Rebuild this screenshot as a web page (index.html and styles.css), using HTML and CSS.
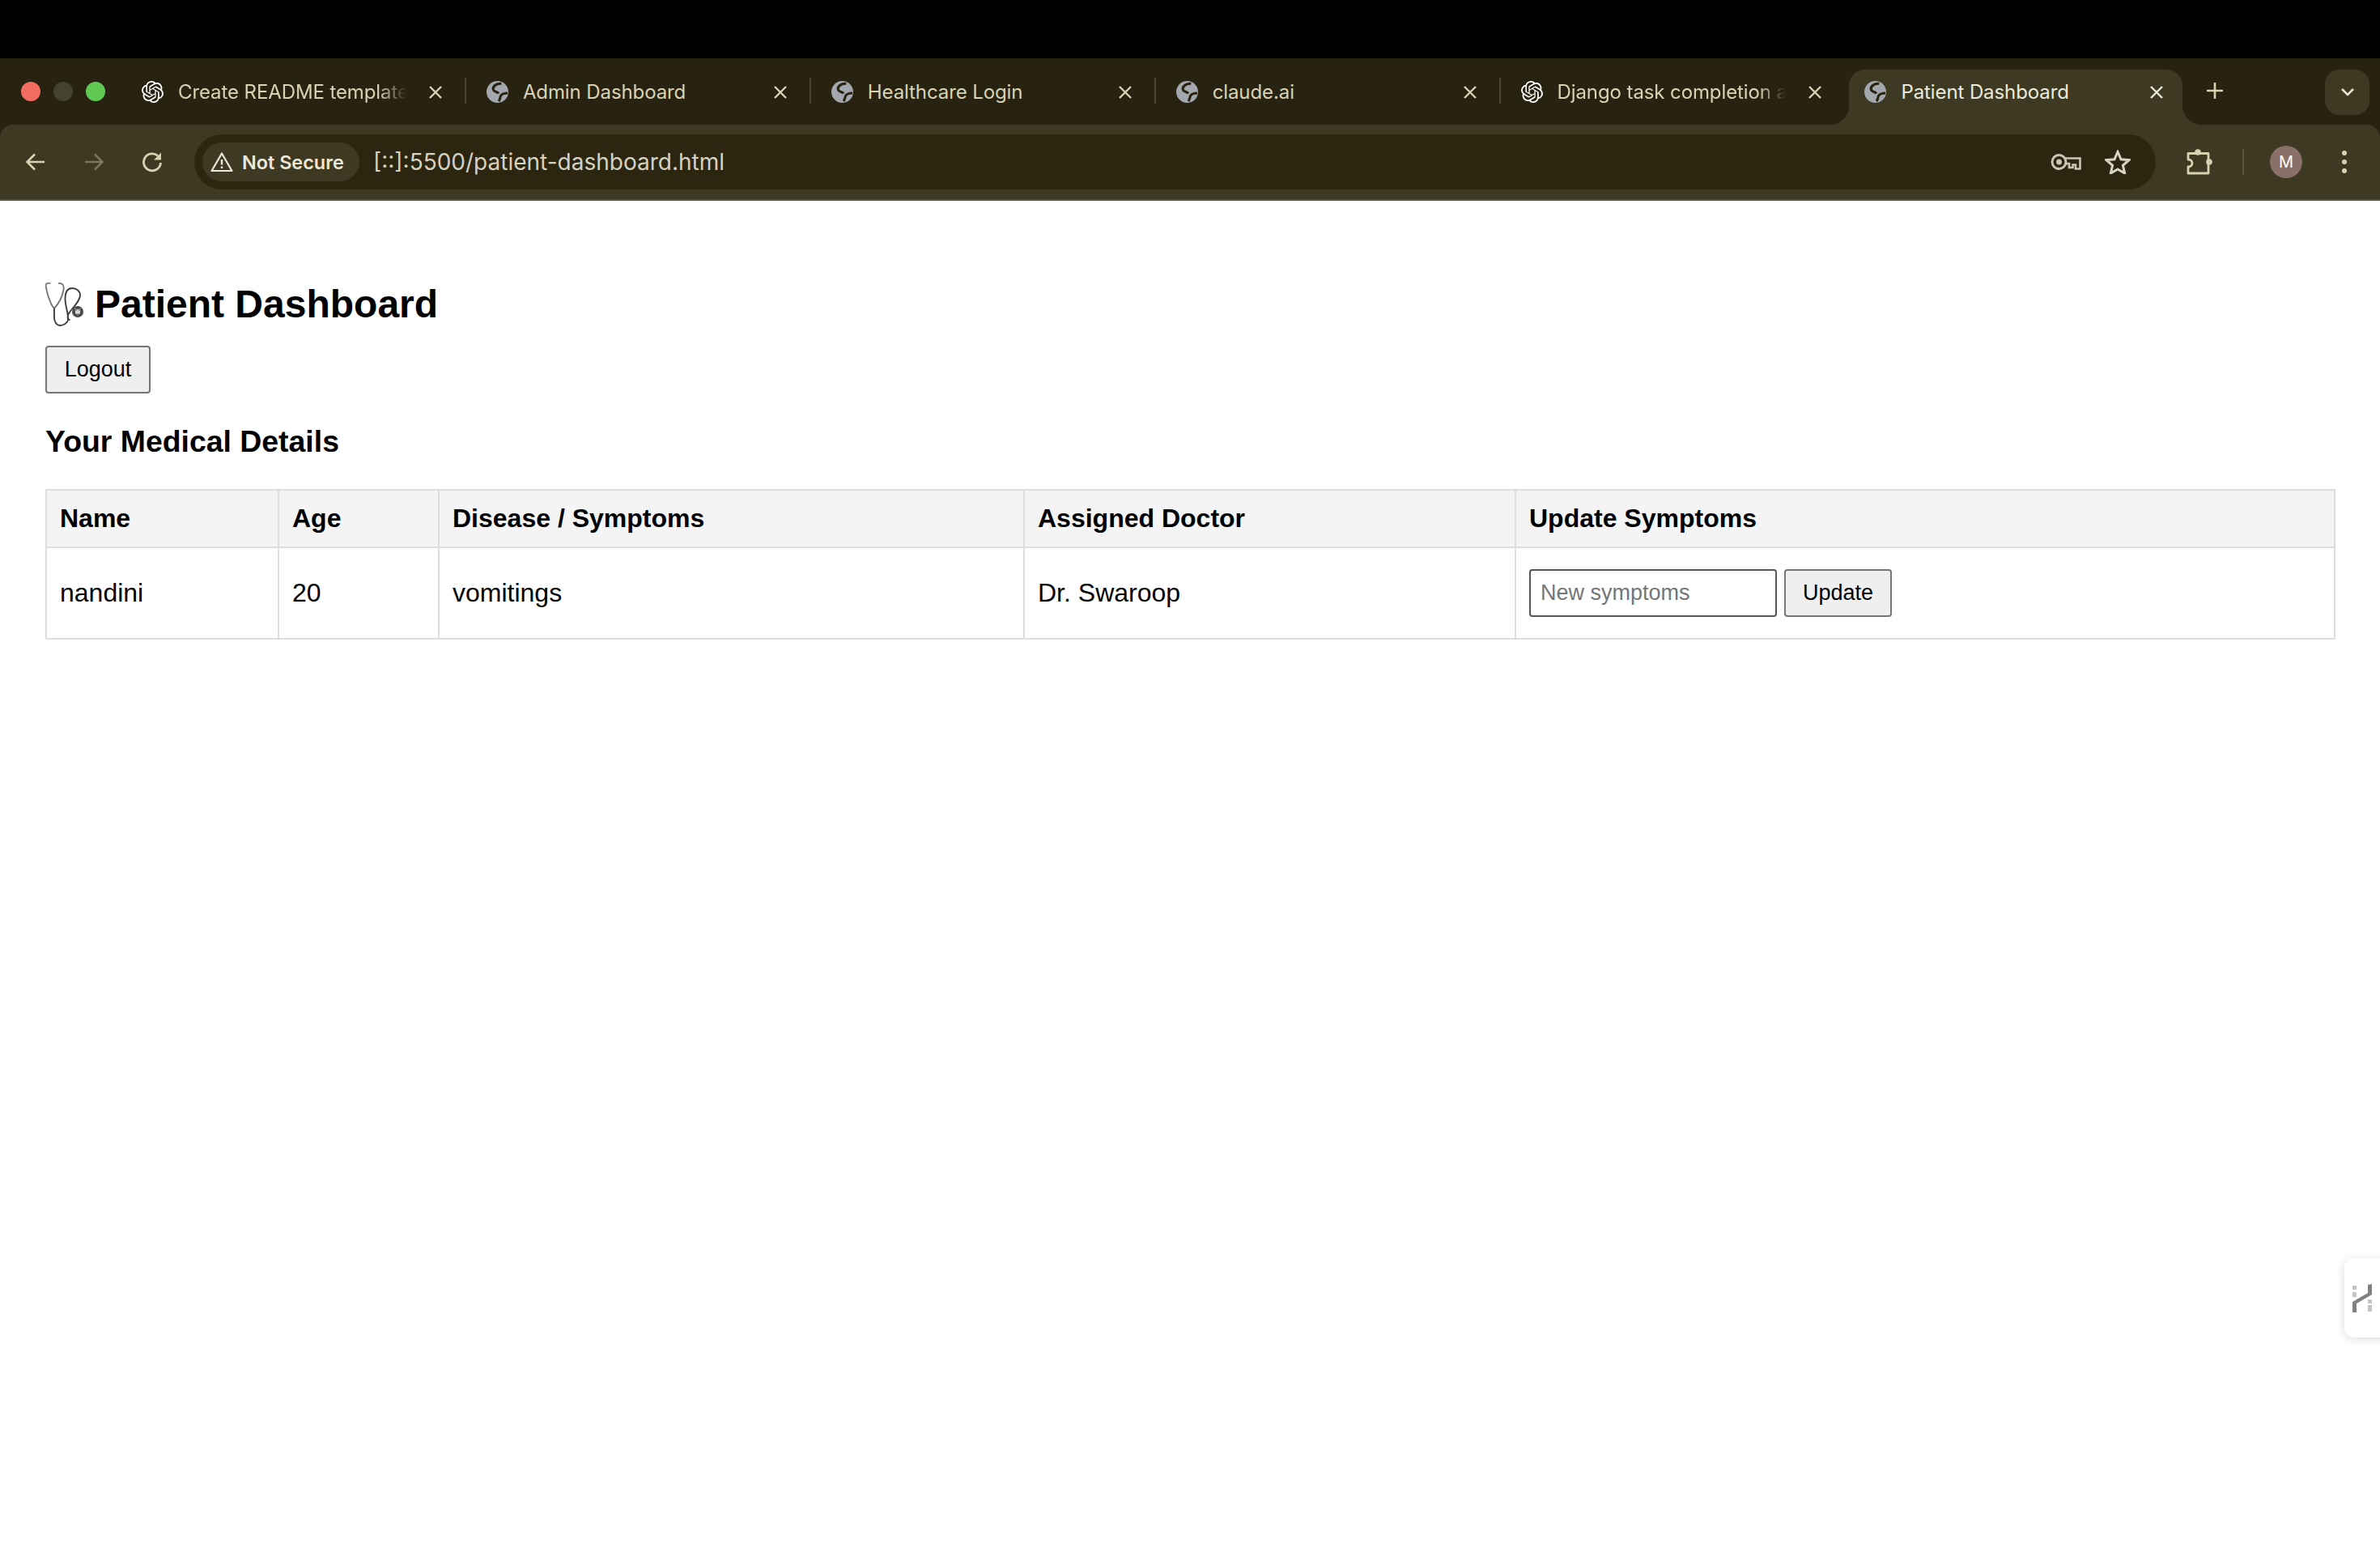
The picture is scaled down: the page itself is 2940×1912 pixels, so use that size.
FILE: index.html
```html
<!DOCTYPE html>
<html lang="en">
<head>
<meta charset="utf-8">
<title>Patient Dashboard</title>
<link rel="stylesheet" href="styles.css">
</head>
<body>
<svg class="defs" width="0" height="0" aria-hidden="true">
  <symbol id="openai" viewBox="0 0 24 24"><path fill="#fff" d="M22.2819 9.8211a5.9847 5.9847 0 0 0-.5157-4.9108 6.0462 6.0462 0 0 0-6.5098-2.9A6.0651 6.0651 0 0 0 4.9807 4.1818a5.9847 5.9847 0 0 0-3.9977 2.9 6.0462 6.0462 0 0 0 .7427 7.0966 5.98 5.98 0 0 0 .511 4.9107 6.051 6.051 0 0 0 6.5146 2.9001A5.9847 5.9847 0 0 0 13.2599 24a6.0557 6.0557 0 0 0 5.7718-4.2058 5.9894 5.9894 0 0 0 3.9977-2.9001 6.0557 6.0557 0 0 0-.7475-7.0729zm-9.022 12.6081a4.4755 4.4755 0 0 1-2.8764-1.0408l.1419-.0804 4.7783-2.7582a.7948.7948 0 0 0 .3927-.6813v-6.7369l2.02 1.1686a.071.071 0 0 1 .038.052v5.5826a4.504 4.504 0 0 1-4.4945 4.4944zm-9.6607-4.1254a4.4708 4.4708 0 0 1-.5346-3.0137l.142.0852 4.783 2.7582a.7712.7712 0 0 0 .7806 0l5.8428-3.3685v2.3324a.0804.0804 0 0 1-.0332.0615L9.74 19.9502a4.4992 4.4992 0 0 1-6.1408-1.6464zM2.3408 7.8956a4.485 4.485 0 0 1 2.3655-1.9728V11.6a.7664.7664 0 0 0 .3879.6765l5.8144 3.3543-2.0201 1.1685a.0757.0757 0 0 1-.071 0l-4.8303-2.7865A4.504 4.504 0 0 1 2.3408 7.872zm16.5963 3.8558L13.1038 8.364 15.1192 7.2a.0757.0757 0 0 1 .071 0l4.8303 2.7913a4.4944 4.4944 0 0 1-.6765 8.1042v-5.6772a.79.79 0 0 0-.407-.667zm2.0107-3.0231l-.142-.0852-4.7735-2.7818a.7759.7759 0 0 0-.7854 0L9.409 9.2297V6.8974a.0662.0662 0 0 1 .0284-.0615l4.8303-2.7866a4.4992 4.4992 0 0 1 6.6802 4.66zM8.3065 12.863l-2.02-1.1638a.0804.0804 0 0 1-.038-.0567V6.0742a4.4992 4.4992 0 0 1 7.3757-3.4537l-.142.0805L8.704 5.459a.7948.7948 0 0 0-.3927.6813zm1.0976-2.3654l2.602-1.4998 2.6069 1.4998v2.9994l-2.5974 1.4997-2.6067-1.4997Z"/></symbol>
  <symbol id="globe" viewBox="0 0 28 28"><circle cx="14" cy="14" r="14" fill="#a3a7ae"/><g fill="none" stroke="#282310" stroke-width="3.200"><path d="M19 3.500C13 3 8 6.500 8.500 10.500 9 14.500 14 13.500 15.500 16"/><path d="M27 15.500C23 15.500 20 16.500 18.500 18.500 17 20.500 18 23 15.500 26"/></g></symbol>
  <symbol id="x" viewBox="0 0 18 18"><path d="M2 2l14 14M16 2L2 16" stroke="currentColor" stroke-width="2.400" fill="none"/></symbol>
</svg>

<div class="black-bar"></div>

<div class="chrome">
<header class="tabstrip">
  <div class="lights">
    <span class="light red"></span><span class="light grey"></span><span class="light green"></span>
  </div>
  <div class="tabs">
    <div class="tab sep"><svg class="favicon"><use href="#openai"/></svg><span class="title fade">Create README template</span><svg class="close"><use href="#x"/></svg></div>
    <div class="tab sep"><svg class="favicon"><use href="#globe"/></svg><span class="title">Admin Dashboard</span><svg class="close"><use href="#x"/></svg></div>
    <div class="tab sep"><svg class="favicon"><use href="#globe"/></svg><span class="title">Healthcare Login</span><svg class="close"><use href="#x"/></svg></div>
    <div class="tab sep"><svg class="favicon"><use href="#globe"/></svg><span class="title">claude.ai</span><svg class="close"><use href="#x"/></svg></div>
    <div class="tab"><svg class="favicon"><use href="#openai"/></svg><span class="title fade">Django task completion and more</span><svg class="close"><use href="#x"/></svg></div>
    <div class="tab active"><svg class="favicon"><use href="#globe"/></svg><span class="title">Patient Dashboard</span><svg class="close"><use href="#x"/></svg></div>
  </div>
  <svg class="newtab" width="24" height="24" viewBox="0 0 24 24"><path d="M12 2v20M2 12h20" stroke="#d8d2b0" stroke-width="2.600" fill="none"/></svg>
  <div class="tablist"><svg width="18" height="12" viewBox="0 0 18 12"><path d="M2 2l7 7 7-7" stroke="#e8e4d0" stroke-width="2.600" fill="none"/></svg></div>
</header>

<nav class="toolbar">
  <div class="navbtns">
    <svg class="ico" width="28" height="28" viewBox="0 0 28 28"><path d="M25 14H4M13 4.500L3.500 14l9.500 9.500" stroke="#d8d2b0" stroke-width="2.600" fill="none"/></svg>
    <svg class="ico" width="28" height="28" viewBox="0 0 28 28"><path d="M3 14h21M15 4.500l9.500 9.500-9.500 9.500" stroke="#7b765f" stroke-width="2.600" fill="none"/></svg>
    <svg class="ico" width="28" height="28" viewBox="0 0 28 28"><path d="M24.500 15a10.500 10.500 0 1 1-3.500-8.500" stroke="#d8d2b0" stroke-width="2.800" fill="none"/><path d="M16 10.500h9v-9z" fill="#d8d2b0" transform="translate(0 1)"/></svg>
  </div>
  <div class="omnibox">
    <div class="chip">
      <svg width="28" height="26" viewBox="0 0 28 26"><path d="M14 2.500L1.500 24h25z" stroke="#ece8d8" stroke-width="2.200" fill="none" stroke-linejoin="round"/><path d="M14 10v6.500M14 18.500V21" stroke="#ece8d8" stroke-width="2.400"/></svg>
      <span>Not Secure</span>
    </div>
    <span class="url">[::]:5500/patient-dashboard.html</span>
    <svg class="key" width="38" height="22" viewBox="0 0 38 22"><circle cx="10.500" cy="11" r="8.500" stroke="#c9c6b4" stroke-width="3" fill="none"/><circle cx="10.500" cy="11" r="3.500" fill="#c9c6b4"/><path d="M18 6.500h18.500v13h-5.500v-5h-3.500v3.500H23v-5h-5" stroke="#c9c6b4" stroke-width="2.600" fill="none"/></svg>
    <svg class="star" width="32" height="30" viewBox="0 0 32 30"><path d="M16 2.500l4 9.300 10 .9-7.600 6.600 2.300 9.800L16 23.900 7.300 29.100l2.300-9.800L2 12.700l10-.9z" stroke="#d7d4c4" stroke-width="3" fill="none" stroke-linejoin="miter"/></svg>
  </div>
  <div class="actions">
    <svg width="34" height="32" viewBox="0 0 34 32"><path d="M3 5.500h25V30H3v-8c3 0 5-2 5-4.500S6 13 3 13z" stroke="#d8d2b0" stroke-width="2.800" fill="none" stroke-linejoin="round"/><circle cx="15" cy="4" r="3.800" fill="#d8d2b0"/><circle cx="29" cy="16" r="3.800" fill="#d8d2b0"/></svg>
    <span class="divider"></span>
    <span class="avatar">M</span>
    <svg class="menu" width="8" height="30" viewBox="0 0 8 30"><circle cx="4" cy="4" r="3" fill="#d8d2b0"/><circle cx="4" cy="15" r="3" fill="#d8d2b0"/><circle cx="4" cy="26" r="3" fill="#d8d2b0"/></svg>
  </div>
</nav>
</div>

<main class="page">
  <h1 class="heading">
    <svg class="stetho" width="48" height="54" viewBox="0 0 48 54"><path d="M6.500 .8C2.500 .2 .2 1.300 .7 4.500 1.500 11 5.500 26 11 32c5.500-6 10-15 11.500-23 .6-3.500-.2-6-1.500-7-1-.7-3-1.200-5-1.200" fill="none" stroke="#77777a" stroke-width="1.900"/><path d="M11 32v11c0 6.500 3.500 10 7 10 4.500 0 9.500-3 10-7 .8-8-3.800-18-3.500-26.500.2-7.500 3-12.500 8.500-12.500 6 0 10 4 10 8.500 0 7-7 13-13 21-3 4-3.500 9.500.5 9.500" fill="none" stroke="#3d3d40" stroke-width="1.900"/><circle cx="40" cy="36" r="7" fill="#4a4a4d"/><circle cx="40" cy="36" r="3.200" fill="#d5d5d8"/><path d="M36 31.500l3 3M44 31.500l-3 3M40 41v-3" stroke="#8a8a8d" stroke-width="1.500"/></svg>
    Patient Dashboard
  </h1>
  <button class="btn logout" type="button">Logout</button>
  <h2 class="subheading">Your Medical Details</h2>
  <table class="records">
    <colgroup>
      <col class="col-name"><col class="col-age"><col class="col-disease"><col class="col-doctor"><col class="col-update">
    </colgroup>
    <thead>
      <tr><th>Name</th><th>Age</th><th>Disease / Symptoms</th><th>Assigned Doctor</th><th>Update Symptoms</th></tr>
    </thead>
    <tbody>
      <tr>
        <td>nandini</td><td>20</td><td>vomitings</td><td>Dr. Swaroop</td>
        <td><div class="update-form"><input class="symptoms" type="text" placeholder="New symptoms"><button class="btn" type="button">Update</button></div></td>
      </tr>
    </tbody>
  </table>
</main>

<aside class="side-widget">
  <svg width="24" height="35" viewBox="0 0 24 35"><path d="M0 35V22l19-11V1l5-1v13L5 24v11z" fill="#808080"/><path d="M0 2h5v5H0zM0 10h5v6H0zM19 19h5v5h-5zM19 26h5v8h-5z" fill="#c4c4c4"/></svg>
</aside>
</body>
</html>
```

FILE: styles.css
```css
* { box-sizing: border-box; }
html, body { margin: 0; height: 100%; }
body {
  display: flex;
  flex-direction: column;
  overflow: hidden;
  background: #fff;
  color: #000;
  font-family: "Liberation Sans", Arial, sans-serif;
}
.defs { position: absolute; }
.black-bar { height: 72px; flex: none; background: #000; }
.chrome { flex: none; background: #282310; }

.tabstrip {
  height: 82px;
  display: flex;
  font-family: Inter, "Noto Sans", sans-serif;
}
.lights { width: 150px; flex: none; display: flex; gap: 16px; padding: 29px 0 0 26px; }
.light { width: 24px; height: 24px; border-radius: 50%; }
.red { background: #f26d60; }
.grey { background: #45432f; }
.green { background: #5fc853; }

.tabs { display: flex; width: 2553px; flex: none; padding-top: 14px; }
.tab {
  position: relative;
  width: 425.900px;
  height: 68px;
  flex: none;
  display: flex;
  align-items: center;
  padding: 0 0 13px 25px;
  color: #d9d3b4;
  font-size: 24px;
}
.tab.sep::after {
  content: "";
  position: absolute;
  right: 0;
  top: 10px;
  width: 2px;
  height: 32px;
  background: #4a4630;
}
.favicon { width: 27px; height: 27px; flex: none; }
.title { width: 282px; margin-left: 18px; white-space: nowrap; overflow: hidden; font-size: 24px; letter-spacing: -0.1px; }
.fade { -webkit-mask-image: linear-gradient(to right, #000 88%, transparent 100%); mask-image: linear-gradient(to right, #000 88%, transparent 100%); }
.close { width: 18px; height: 18px; margin-left: 27px; flex: none; }
.tab.active {
  width: 412px;
  margin-left: 5px;
  padding-left: 19px;
  background: #3e3923;
  border-radius: 20px 20px 0 0;
  color: #ece9da;
}
.tab.active .title { margin-left: 18px; }
.tab.active .close { margin-left: 25px; }
.tab.active::before, .tab.active::after {
  content: "";
  position: absolute;
  bottom: 0;
  width: 24px;
  height: 24px;
}
.tab.active::before { left: -24px; background: radial-gradient(circle at 0 0, transparent 24px, #3e3923 24.500px); }
.tab.active::after { right: -24px; background: radial-gradient(circle at 100% 0, transparent 24px, #3e3923 24.500px); }

.newtab { margin: 28px 0 0 21px; flex: none; }
.tablist {
  width: 55px;
  height: 56px;
  margin: 14px 13px 0 auto;
  flex: none;
  border-radius: 18px;
  background: #3e3923;
  display: flex;
  align-items: center;
  justify-content: center;
}

.toolbar {
  height: 94px;
  display: flex;
  align-items: flex-start;
  padding-top: 12px;
  background: #3e3923;
  border-bottom: 2px solid #57533f;
  border-radius: 16px 16px 0 0;
}
.navbtns { width: 240px; flex: none; display: flex; gap: 44px; padding: 20px 0 0 30px; }
.omnibox {
  width: 2423px;
  height: 68px;
  flex: none;
  display: flex;
  align-items: center;
  padding: 0 31px 0 10px;
  border-radius: 34px;
  background: #2c2510;
  color: #d5d2c2;
  font-family: Inter, "Noto Sans", sans-serif;
}
.chip {
  width: 194px;
  height: 48px;
  flex: none;
  display: flex;
  align-items: center;
  gap: 11px;
  padding-left: 10px;
  border-radius: 24px;
  background: #3e3923;
  color: #ece8d8;
  font-size: 23.400px;
  font-weight: 600;
  white-space: nowrap;
}
.url { margin-left: 17px; font-size: 28px; flex: 1; white-space: nowrap; }
.key { margin-right: 29px; }
.actions { flex: 1; display: flex; align-items: center; height: 68px; padding-left: 37px; }
.divider { width: 2px; height: 32px; margin-left: 36px; background: #57533f; }
.avatar {
  width: 40px;
  height: 40px;
  margin-left: 32px;
  border-radius: 50%;
  background: #8a7068;
  color: #fff;
  font: 20px/40px Inter, sans-serif;
  text-align: center;
}
.menu { margin-left: 48px; }

.page { padding: 0 56px; flex: 1; }
.heading { display: flex; align-items: center; gap: 13px; margin: 100px 0 0; font-size: 48px; line-height: 55px; font-weight: 700; }
.stetho { flex: none; }
.btn {
  height: 59px;
  padding: 0 22px;
  border: 2px solid #767676;
  border-radius: 4px;
  background: #efefef;
  color: #000;
  font: 27px "Liberation Sans", Arial, sans-serif;
}
.logout { display: block; margin-top: 24px; width: 130px; padding: 0; }
.subheading { margin: 38px 0 0; font-size: 37.400px; line-height: 42px; font-weight: 700; }
.records { width: 2827px; margin-top: 38px; border-collapse: collapse; table-layout: fixed; }
.col-name { width: 287px; }
.col-age { width: 198px; }
.col-disease { width: 723px; }
.col-doctor { width: 607px; }
.col-update { width: 1012px; }
.records th, .records td { border: 2px solid #ddd; padding: 0 16px; text-align: left; font-size: 32px; }
.records th { height: 71px; background: #f4f4f4; font-weight: 700; }
.records td { height: 113px; }
.update-form { display: flex; gap: 9px; align-items: center; }
.symptoms {
  width: 306px;
  height: 59px;
  padding: 0 12px;
  border: 2px solid #555;
  border-radius: 4px;
  font: 27px "Liberation Sans", Arial, sans-serif;
}
.symptoms::placeholder { color: #757575; opacity: 1; }
.update-form .btn { width: 133px; padding: 0; }

.side-widget {
  position: absolute;
  left: 2896px;
  top: 1554px;
  width: 60px;
  height: 98px;
  padding: 32px 0 0 10px;
  background: #fff;
  border-radius: 12px;
  box-shadow: 0 2px 12px rgba(0, 0, 0, 0.14);
}
```
